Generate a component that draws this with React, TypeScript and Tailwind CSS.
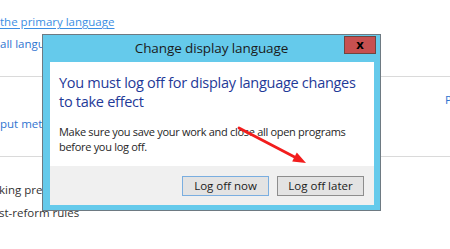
import React from 'react';

const font = { fontFamily: '"Open Sans", "Noto Sans", sans-serif' };

const Separator: React.FC = () => <div className="h-px bg-[#dadada]" />;

const LogOffDialog: React.FC = () => {
  return (
    <div className="absolute left-[42px] top-[34px] w-[339px] h-[177px] border border-[#6e7a82] bg-[#65caeb] flex flex-col">
      <div className="relative h-[27px] flex items-center justify-center">
        <span className="text-[13.5px] text-[#1b1b1b] tracking-[-0.1px]">Change display language</span>
        <button className="absolute right-[4px] top-[1px] w-[32px] h-[18px] bg-[#c75050] border border-[#70453f] flex items-center justify-center">
          <span className="text-[13px] font-bold leading-none text-black -mt-[2px]">x</span>
        </button>
      </div>
      <div className="flex-1 ml-[7px] mr-[6px] mb-[5px] flex flex-col bg-white">
        <div className="pl-[9px] pt-[11px] pb-[12px]">
          <p className="text-[14.5px] leading-[19px] text-[#1f3a98] tracking-[-0.28px]">
            You must log off for display language changes
            <br />
            to take effect
          </p>
          <p className="mt-[13px] text-[11px] leading-[15px] text-[#262626] tracking-[-0.3px]">
            Make sure you save your work and close all open programs
            <br />
            before you log off.
          </p>
        </div>
        <div className="flex-1 bg-[#f0f0f0] flex justify-end items-start gap-[8px] pt-[10px] pr-[10px]">
          <button className="w-[87px] h-[20px] bg-[#e3e3e3] border border-[#7aaee0] text-[11.5px] text-[#1b1b1b] leading-none">
            Log off now
          </button>
          <button className="w-[87px] h-[20px] bg-[#e3e3e3] border border-[#8d8d8d] text-[11.5px] text-[#1b1b1b] leading-none">
            Log off later
          </button>
        </div>
      </div>
    </div>
  );
};

const App: React.FC = () => {
  return (
    <div className="relative w-[450px] h-[249px] overflow-hidden bg-white" style={font}>
      <div className="flex flex-col pt-[14px] text-[11.5px] whitespace-nowrap">
        <div className="h-[16px] leading-[16px] text-[#3b8ee3] underline underline-offset-2">the primary language</div>
        <div className="mt-[6px] h-[16px] leading-[16px] text-[#2f74d0]">all languages</div>
        <div className="mt-[24px]"><Separator /></div>
        <div className="mt-[15px] h-[16px] leading-[16px] text-[#2f74d0] pl-[445px]">Preferences</div>
        <div className="mt-[8px] h-[16px] leading-[16px] text-[#2f74d0] -ml-[10px]">input methods</div>
        <div className="mt-[24px]"><Separator /></div>
        <div className="mt-[25px] h-[16px] leading-[16px] text-[#333333] -ml-[1px]">king preferences</div>
        <div className="mt-[7px] h-[16px] leading-[16px] text-[#333333] -ml-[1px]">st-reform rules</div>
      </div>

      <LogOffDialog />

      <svg className="absolute left-0 top-0 pointer-events-none" width="450" height="249" viewBox="0 0 450 249">
        <line x1="239" y1="128" x2="296" y2="157.8" stroke="#f21d1d" strokeWidth="2.8" strokeLinecap="round" />
        <polygon points="306,163 292.2,161.4 296.8,152.6" fill="#f21d1d" />
      </svg>
    </div>
  );
};

export default App;
